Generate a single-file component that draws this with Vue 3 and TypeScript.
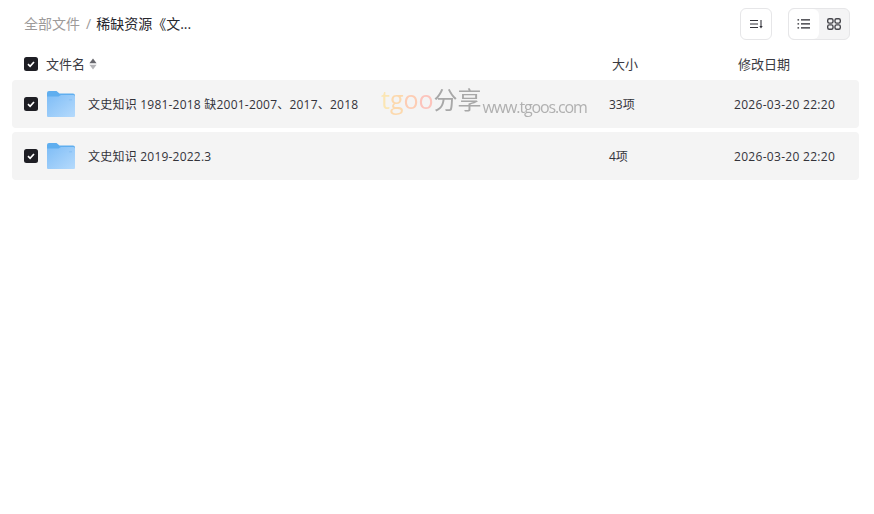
<template>
  <div class="page">
    <div class="topbar">
      <div class="crumbs">
        <span class="crumb-root">全部文件</span>
        <span class="crumb-sep">/</span>
        <span class="crumb-current">稀缺资源《文...</span>
      </div>
      <div class="tools">
        <button class="tool-btn sort-btn" type="button">
          <svg width="16" height="16" viewBox="0 0 16 16" fill="none" stroke="#33333a" stroke-width="1.1">
            <path d="M2 4.5h8M2 8h8M2 11.5h8" />
            <path d="M13 4v7" />
            <path d="M11.3 10 13 12.6l1.7-2.6z" fill="#33333a" stroke="none" />
          </svg>
        </button>
        <div class="view-switch">
          <div class="view-item active">
            <svg width="16" height="16" viewBox="0 0 16 16" fill="none" stroke="#26262c" stroke-width="1.1">
              <path d="M5 3.9h9M5 7.9h9M5 11.9h9" />
              <path d="M1.5 3.9h1.6M1.5 7.9h1.6M1.5 11.9h1.6" />
            </svg>
          </div>
          <div class="view-item">
            <svg width="16" height="16" viewBox="0 0 16 16" fill="none" stroke="#46464c" stroke-width="1.4">
              <rect x="1.7" y="2.7" width="5.3" height="4.4" rx="1.5" />
              <rect x="9" y="2.7" width="5.3" height="4.4" rx="1.5" />
              <rect x="1.7" y="8.9" width="5.3" height="4.4" rx="1.5" />
              <rect x="9" y="8.9" width="5.3" height="4.4" rx="1.5" />
            </svg>
          </div>
        </div>
      </div>
    </div>

    <div class="list-head">
      <span class="check"><svg width="10" height="10" viewBox="0 0 10 10"><path d="M2 5.2 4.1 7.3 8 3" fill="none" stroke="#fff" stroke-width="1.7" /></svg></span>
      <div class="head-name">
        <span class="head-text">文件名</span>
        <svg class="sort-arrows" width="8" height="12" viewBox="0 0 8 12">
          <path d="M4 .4 7.6 5.2H.4z" fill="#66666c" />
          <path d="M4 11.6 7.6 6.8H.4z" fill="#b4b4b8" />
        </svg>
      </div>
      <span class="head-size head-text">大小</span>
      <span class="head-date head-text">修改日期</span>
    </div>

    <div class="rows">
      <div v-for="row in rows" :key="row.name" class="row">
        <span class="check"><svg width="10" height="10" viewBox="0 0 10 10"><path d="M2 5.2 4.1 7.3 8 3" fill="none" stroke="#fff" stroke-width="1.7" /></svg></span>
        <svg class="folder" width="30" height="28" viewBox="0 0 30 28">
          <defs>
            <linearGradient :id="`fold-${row.id}`" x1="0" y1="0" x2="1" y2="1">
              <stop offset="0" stop-color="#7fbdf6" />
              <stop offset="1" stop-color="#b5dafc" />
            </linearGradient>
          </defs>
          <path d="M1 3a2 2 0 0 1 2-2h7.5l3 2.5H27a2 2 0 0 1 2 2V10H1z" fill="#5faeef" />
          <path d="M1 6.5h11.5L15 5h12.5a1.5 1.5 0 0 1 1.5 1.5V26a1 1 0 0 1-1 1H2a1 1 0 0 1-1-1z" :fill="`url(#fold-${row.id})`" />
          <rect x="23" y="9" width="3" height="1.5" fill="#8dc3f5" />
        </svg>
        <span class="row-name">{{ row.name }}</span>
        <span class="row-size">{{ row.size }}</span>
        <span class="row-date">{{ row.date }}</span>
      </div>
    </div>

    <div class="watermark">
      <span class="wm-t">t</span><span class="wm-g">g</span><span class="wm-o1">o</span><span class="wm-o2">o</span><span class="wm-cn">分享</span><span class="wm-url">www.tgoos.com</span>
    </div>
  </div>
</template>

<script setup lang="ts">
interface FileRow {
  id: number
  name: string
  size: string
  date: string
}

const rows: FileRow[] = [
  { id: 1, name: '文史知识 1981-2018 缺2001-2007、2017、2018', size: '33项', date: '2026-03-20 22:20' },
  { id: 2, name: '文史知识 2019-2022.3', size: '4项', date: '2026-03-20 22:20' }
]
</script>

<style>
html,
body {
  background: #fff;
}
</style>

<style scoped>
.page {
  position: relative;
  width: 874px;
  height: 514px;
  overflow: hidden;
  font-family: "Open Sans", "Noto Sans CJK SC", sans-serif;
  color: #26262c;
  font-size: 12px;
}

.topbar {
  display: flex;
  align-items: center;
  justify-content: space-between;
  height: 32px;
  padding: 8px 24px 0;
}

.crumbs {
  display: flex;
  align-items: center;
  padding-bottom: 2px;
  font-size: 14px;
}

.crumb-root {
  color: #9d9a9a;
}

.crumb-sep {
  margin: 0 5px 0 6px;
  color: #9d9a9a;
}

.crumb-current {
  color: #26262c;
}

.tools {
  display: flex;
  align-items: center;
  gap: 16px;
}

.tool-btn {
  display: flex;
  align-items: center;
  justify-content: center;
  width: 32px;
  height: 32px;
  padding: 0;
  background: #fff;
  border: 1px solid #e6e6e8;
  border-radius: 6px;
}

.view-switch {
  display: flex;
  width: 62px;
  height: 32px;
  box-sizing: border-box;
  background: #f4f4f5;
  border: 1px solid #e6e6e8;
  border-radius: 6px;
  overflow: hidden;
}

.view-item {
  display: flex;
  flex: 1;
  align-items: center;
  justify-content: center;
}

.view-item.active {
  background: #fff;
  border-radius: 6px;
}

.list-head {
  display: flex;
  align-items: center;
  height: 32px;
  margin-top: 8px;
  padding: 0 12px;
  font-size: 13px;
  color: #3a3a42;
}

.head-text {
  padding-bottom: 2px;
}

.check {
  display: flex;
  flex: none;
  align-items: center;
  justify-content: center;
  width: 14px;
  height: 14px;
  margin-left: 12px;
  border-radius: 2.5px;
  background: #1e1e24;
}

.head-name {
  display: flex;
  align-items: center;
  gap: 4px;
  width: 566px;
  margin-left: 8px;
}

.head-size {
  width: 126px;
}

.rows {
  display: flex;
  flex-direction: column;
  gap: 4px;
  margin: 0 15px 0 12px;
}

.row {
  display: flex;
  align-items: center;
  height: 48px;
  background: #f4f4f4;
  border-radius: 4px;
  color: #33333a;
}

.folder {
  flex: none;
  margin-left: 8px;
}

.row-name {
  width: 521px;
  margin-left: 12px;
  letter-spacing: .22px;
}

.row-size {
  width: 125px;
}

.row-date {
  letter-spacing: .3px;
}

.watermark {
  position: absolute;
  left: 381px;
  top: 83px;
  display: flex;
  align-items: baseline;
  font-size: 25px;
  line-height: 32px;
  filter: blur(.4px);
  pointer-events: none;
}

.wm-t { color: #fbe6b4; }
.wm-g { color: #fcd9ae; }
.wm-o1 { color: #fdcdb4; }
.wm-o2 { color: #fcc4bc; }
.wm-cn {
  font-size: 24px;
  color: #a8a8a8;
}
.wm-url {
  margin-left: 1px;
  font-size: 16px;
  letter-spacing: -1.15px;
  color: #b0b0b0;
  transform: translateY(4px);
}
</style>
